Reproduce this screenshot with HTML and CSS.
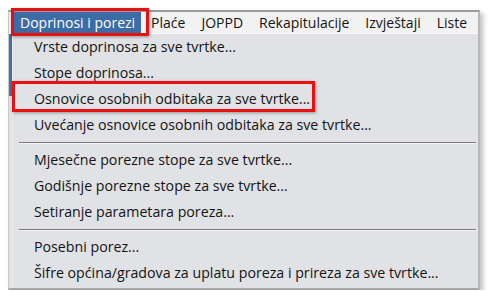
FILE: index.html
```html
<!DOCTYPE html>
<html lang="hr">
<head>
    <meta charset="UTF-8">
    <title>Doprinosi i porezi</title>
    <link rel="stylesheet" href="styles.css">
</head>
<body>
    <div class="window">
        <div class="menubar">
            <span class="menu active">Doprinosi i porezi</span>
            <span class="menu">Plaće</span>
            <span class="menu">JOPPD</span>
            <span class="menu">Rekapitulacije</span>
            <span class="menu">Izvještaji</span>
            <span class="menu">Liste</span>
        </div>
        <div class="body">
            <div class="strip"></div>
            <ul class="dropdown">
                <li>Vrste doprinosa za sve tvrtke...</li>
                <li>Stope doprinosa...</li>
                <li class="marked">Osnovice osobnih odbitaka za sve tvrtke...</li>
                <li>Uvećanje osnovice osobnih odbitaka za sve tvrtke...</li>
                <li class="sep"></li>
                <li>Mjesečne porezne stope za sve tvrtke...</li>
                <li>Godišnje porezne stope za sve tvrtke...</li>
                <li>Setiranje parametara poreza...</li>
                <li class="sep"></li>
                <li>Posebni porez...</li>
                <li>Šifre općina/gradova za uplatu poreza i prireza za sve tvrtke...</li>
            </ul>
        </div>
        <!-- crvene oznake -->
        <div class="mark mark-menu"></div>
        <div class="mark mark-item"></div>
    </div>
</body>
</html>
```

FILE: styles.css
```css
body {
    margin: 0;
    background: #ffffff;
    font-family: "Open Sans", "Noto Sans", sans-serif;
    color: #141414;
}

.window {
    position: relative;
    margin: 10px 0 0 8px;
    width: 469px;
    border-top: 2px solid #9c9c9c;
    border-left: 1px solid #c8c8c8;
    border-right: 2px solid #b8b8b8;
    border-bottom: 2px solid #a8a8a8;
    box-shadow: 3px 3px 5px rgba(0, 0, 0, 0.25);
    background: #e1e2e5;
}

.menubar {
    display: flex;
    height: 21px;
    align-items: center;
    padding-left: 5px;
    background: #f2f2f3;
    border-bottom: 1px solid #fafafa;
    font-size: 14px;
}

.menu {
    padding: 0 7px;
    margin-right: 2px;
    line-height: 21px;
}

.menu.active {
    background: #3b6ca6;
    color: #ffffff;
    padding: 0 6px;
    margin-right: 3px;
}

.body {
    display: flex;
}

.strip {
    width: 3px;
    height: 62px;
    background: #4a6fa0;
    flex: none;
}

.dropdown {
    list-style: none;
    margin: 0;
    padding: 0 0 2px 0;
    flex: 1;
    border-left: 1px solid #ececec;
    font-size: 14.2px;
}

.dropdown li {
    height: 26px;
    line-height: 26px;
    padding-left: 21px;
}

.dropdown li.sep {
    height: 1px;
    margin: 4px 2px 3px 6px;
    background: #7a7a7a;
    border-bottom: 1px solid #f4f4f4;
}

.mark {
    position: absolute;
    border: 3px solid #e81010;
    box-shadow: 1px 1px 3px rgba(0, 0, 0, 0.35);
}

.mark-menu {
    left: 2px;
    top: -4px;
    width: 132px;
    height: 22px;
}

.mark-item {
    left: 3px;
    top: 69px;
    width: 297px;
    height: 25px;
}
```
